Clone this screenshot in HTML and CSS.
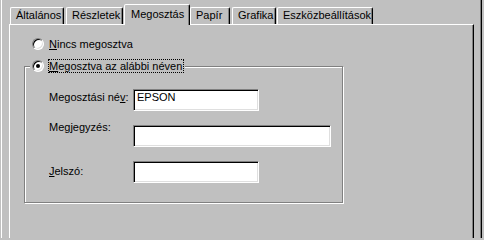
FILE: index.html
```html
<!DOCTYPE html>
<html lang="hu">
<head>
<meta charset="utf-8">
<title>Tulajdonságok – Megosztás</title>
<link rel="stylesheet" href="styles.css">
</head>
<body>
<div class="frame">
  <div class="tabctl">
    <div class="tabs">
      <div class="tab t-altalanos">Általános</div>
      <div class="tab t-reszletek">Részletek</div>
      <div class="tab tab-active t-megosztas">Megosztás</div>
      <div class="tab t-papir">Papír</div>
      <div class="tab t-grafika">Grafika</div>
      <div class="tab t-eszkoz">Eszközbeállítások</div>
    </div>
    <div class="panel">
      <div class="option option-first">
        <span class="radio"></span>
        <span class="opt-label"><u>N</u>incs megosztva</span>
      </div>
      <div class="group">
        <div class="option legend">
          <span class="radio radio-on"></span>
          <span class="opt-label focus"><u>M</u>egosztva az alábbi néven</span>
        </div>
        <div class="fields">
          <div class="field-row">
            <span class="field-label lbl-name">Megosztási né<u>v</u>:</span>
            <div class="edit edit-short">EPSON</div>
          </div>
          <div class="field-row">
            <span class="field-label lbl-comment">Me<u>g</u>jegyzés:</span>
            <div class="edit edit-long"></div>
          </div>
          <div class="field-row">
            <span class="field-label lbl-pass"><u>J</u>elszó:</span>
            <div class="edit edit-short"></div>
          </div>
        </div>
      </div>
    </div>
  </div>
</div>
</body>
</html>
```

FILE: styles.css
```css
* { box-sizing: border-box; }
html, body { margin: 0; padding: 0; }
body {
  width: 484px;
  height: 238px;
  overflow: hidden;
  background: #c0c0c0;
  color: #000;
  font-family: "Liberation Sans", Arial, sans-serif;
  font-size: 11px;
  line-height: 13px;
}
u { text-decoration: underline; text-underline-offset: 1px; }

.frame {
  margin-left: 1px;
  width: 481px;
  height: 238px;
  border-left: 1px solid #fff;
  border-right: 1px solid #000;
  box-shadow: inset -1px 0 #808080;
  padding-left: 7px;
}
.tabctl { width: 465px; }

.tabs {
  display: flex;
  align-items: flex-end;
  height: 24px;
  padding-left: 1px;
}
.tab {
  height: 17px;
  border: 1px solid;
  border-bottom: 0;
  border-color: #fff #000 transparent #fff;
  border-radius: 2px 2px 0 0;
  box-shadow: inset -1px 0 #808080;
  padding: 1px 0 0 5px;
  white-space: nowrap;
  margin-right: 2px;
  flex: none;
}
.tab-active {
  height: 21px;
  margin-bottom: -1px;
  padding: 3px 0 0 6px;
  position: relative;
  z-index: 1;
  background: #c0c0c0;
}
.t-altalanos { width: 54px; }
.t-reszletek { width: 57px; margin-right: 1px; }
.t-megosztas { width: 66px; margin-right: 0; }
.t-papir { width: 40px; }
.t-grafika { width: 44px; margin-right: 1px; }
.t-eszkoz { width: 96px; }

.panel {
  height: 220px;
  border-top: 1px solid #fff;
  border-left: 1px solid #fff;
  border-right: 1px solid #000;
  box-shadow: inset -1px 0 #808080;
  padding: 12px 0 0 14px;
}

.option {
  display: flex;
  align-items: center;
  gap: 4px;
}
.option-first { margin-left: 8px; }

.radio {
  flex: none;
  position: relative;
  width: 12px;
  height: 12px;
  border-radius: 50%;
  background: #fff;
  border: 1px solid;
  border-color: #808080 #fff #fff #808080;
  box-shadow: inset 1px 1px #000, inset -1px -1px #dfdfdf;
}
.radio-on::after {
  content: "";
  position: absolute;
  left: 3px;
  top: 3px;
  width: 4px;
  height: 4px;
  border-radius: 50%;
  background: #000;
}
.opt-label {
  border: 1px dotted transparent;
  line-height: 12px;
  padding-right: 1px;
  white-space: nowrap;
}
.focus { border-color: #000; }

.group {
  margin-top: 15px;
  width: 319px;
  height: 137px;
  border: 1px solid #808080;
  box-shadow: inset 1px 1px #fff, 1px 1px #fff;
}
.legend {
  width: max-content;
  margin: -8px 0 0 5px;
  padding: 0 1px 0 2px;
  background: #c0c0c0;
  position: relative;
}

.fields {
  margin-top: 16px;
  padding-left: 24px;
  display: flex;
  flex-direction: column;
  gap: 14px;
}
.field-row {
  display: flex;
  align-items: flex-start;
  height: 22px;
}
.field-label {
  flex: none;
  width: 84px;
  white-space: nowrap;
}
.lbl-name { margin-top: 2px; }
.lbl-comment { margin-top: -4px; }
.lbl-pass { margin-top: 4px; }

.edit {
  flex: none;
  height: 22px;
  background: #fff;
  border: 1px solid;
  border-color: #808080 #fff #fff #808080;
  box-shadow: inset 1px 1px #000, inset -1px -1px #dfdfdf;
  padding: 1px 0 0 3px;
}
.edit-short { width: 126px; }
.edit-long { width: 198px; }
```
